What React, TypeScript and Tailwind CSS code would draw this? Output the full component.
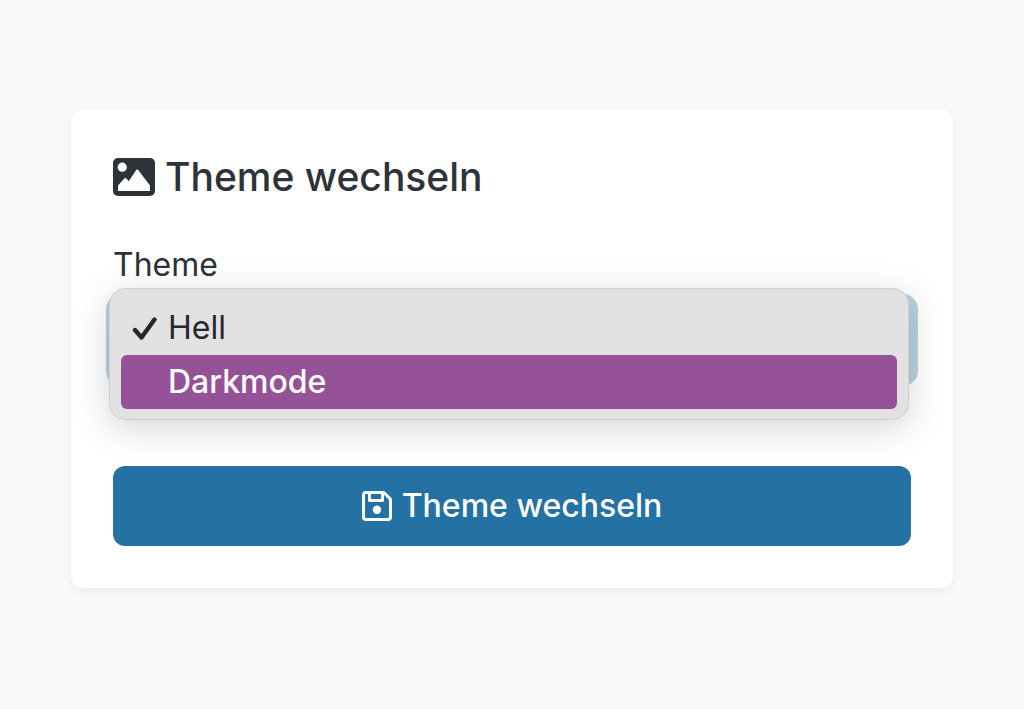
import React, { useState } from "react";

const themes = [
  { value: "light", label: "Hell" },
  { value: "dark", label: "Darkmode" },
];

const ImageIcon = () => (
  <svg viewBox="0 0 42 38" className="w-[42px] h-[38px] shrink-0" aria-hidden="true">
    <rect width="42" height="38" rx="5" fill="currentColor" />
    <circle cx="9.2" cy="9.2" r="4.6" fill="white" />
    <path
      d="M5 33 V27.5 L11.3 20.6 Q12.3 19.6 13.3 20.6 L15.8 23.2 L23.2 12 Q24.2 10.8 25.2 12 L37 27.5 V33 Z"
      fill="white"
    />
  </svg>
);

const SaveIcon = () => (
  <svg viewBox="0 0 30 30" className="w-[30px] h-[30px] shrink-0" aria-hidden="true">
    <g fill="none" stroke="currentColor" strokeWidth="3" strokeLinejoin="round">
      <path d="M4 1.5 H20.8 Q21.8 1.5 22.6 2.3 L27.7 7.4 Q28.5 8.2 28.5 9.2 V26 Q28.5 28.5 26 28.5 H4 Q1.5 28.5 1.5 26 V4 Q1.5 1.5 4 1.5 Z" />
      <path d="M7.5 2 V9.5 H20.5 V2" />
    </g>
    <circle cx="15" cy="18.8" r="4.2" fill="currentColor" />
  </svg>
);

const CheckMark = () => (
  <svg viewBox="0 0 26 26" className="w-[26px] h-[26px]" aria-hidden="true">
    <path
      d="M3 15 L9.5 22.5 L22.5 4.5"
      fill="none"
      stroke="currentColor"
      strokeWidth="4.4"
      strokeLinecap="round"
      strokeLinejoin="round"
    />
  </svg>
);

const App = () => {
  const [theme, setTheme] = useState("light");
  const [open, setOpen] = useState(true);

  const selectTheme = (value: string) => {
    setTheme(value);
    setOpen(false);
  };

  return (
    <main className="min-h-screen bg-[#f8f9fb] px-[71px] pt-[109px] pb-16 font-['Inter','Liberation_Sans',sans-serif] text-[#2d3338]">
      <form
        onSubmit={(e) => e.preventDefault()}
        className="flex flex-col rounded-xl bg-white px-[42px] pt-10 pb-[42px] shadow-[0_3px_10px_rgba(0,0,0,0.06)]"
      >
        {/* Title */}
        <h1 className="flex items-center gap-2.5 h-14 text-[39px] font-medium whitespace-nowrap">
          <ImageIcon />
          Theme wechseln
        </h1>

        {/* Theme field */}
        <label htmlFor="theme" className="mt-10 text-[32px] leading-10">
          Theme
        </label>
        <div className="relative mt-4">
          <select
            id="theme"
            value={theme}
            onChange={(e) => setTheme(e.target.value)}
            className="block w-full h-[78px] appearance-none rounded-lg bg-white px-6 text-[32px] outline-9 -outline-offset-2 outline-[#b9d2df]"
          >
            {themes.map((item) => (
              <option key={item.value} value={item.value}>
                {item.label}
              </option>
            ))}
          </select>

          {/* Open option list */}
          {open && (
            <div className="absolute -top-[13px] -left-1 right-0.5 flex flex-col rounded-2xl border border-[#cfcfcf] bg-[#e2e2e2] px-[11px] pt-3 pb-2.5 text-[32px] shadow-[0_8px_36px_rgba(0,0,0,0.17)]">
              {themes.map((item) => (
                <button
                  key={item.value}
                  type="button"
                  onClick={() => selectTheme(item.value)}
                  className={
                    item.value === "dark"
                      ? "flex items-center gap-2 h-[54px] rounded-md bg-[#965296] px-[11px] font-medium text-white"
                      : "flex items-center gap-2 h-[54px] rounded-md px-[11px] text-[#26282a]"
                  }
                >
                  <span className="w-7">
                    {item.value === theme && <CheckMark />}
                  </span>
                  {item.label}
                </button>
              ))}
            </div>
          )}
        </div>

        {/* Submit */}
        <button
          type="submit"
          className="mt-[87px] flex h-20 items-center justify-center gap-2.5 rounded-xl bg-[#2471a3] text-[32px] font-medium whitespace-nowrap text-white"
        >
          <SaveIcon />
          Theme wechseln
        </button>
      </form>
    </main>
  );
};

export default App;
